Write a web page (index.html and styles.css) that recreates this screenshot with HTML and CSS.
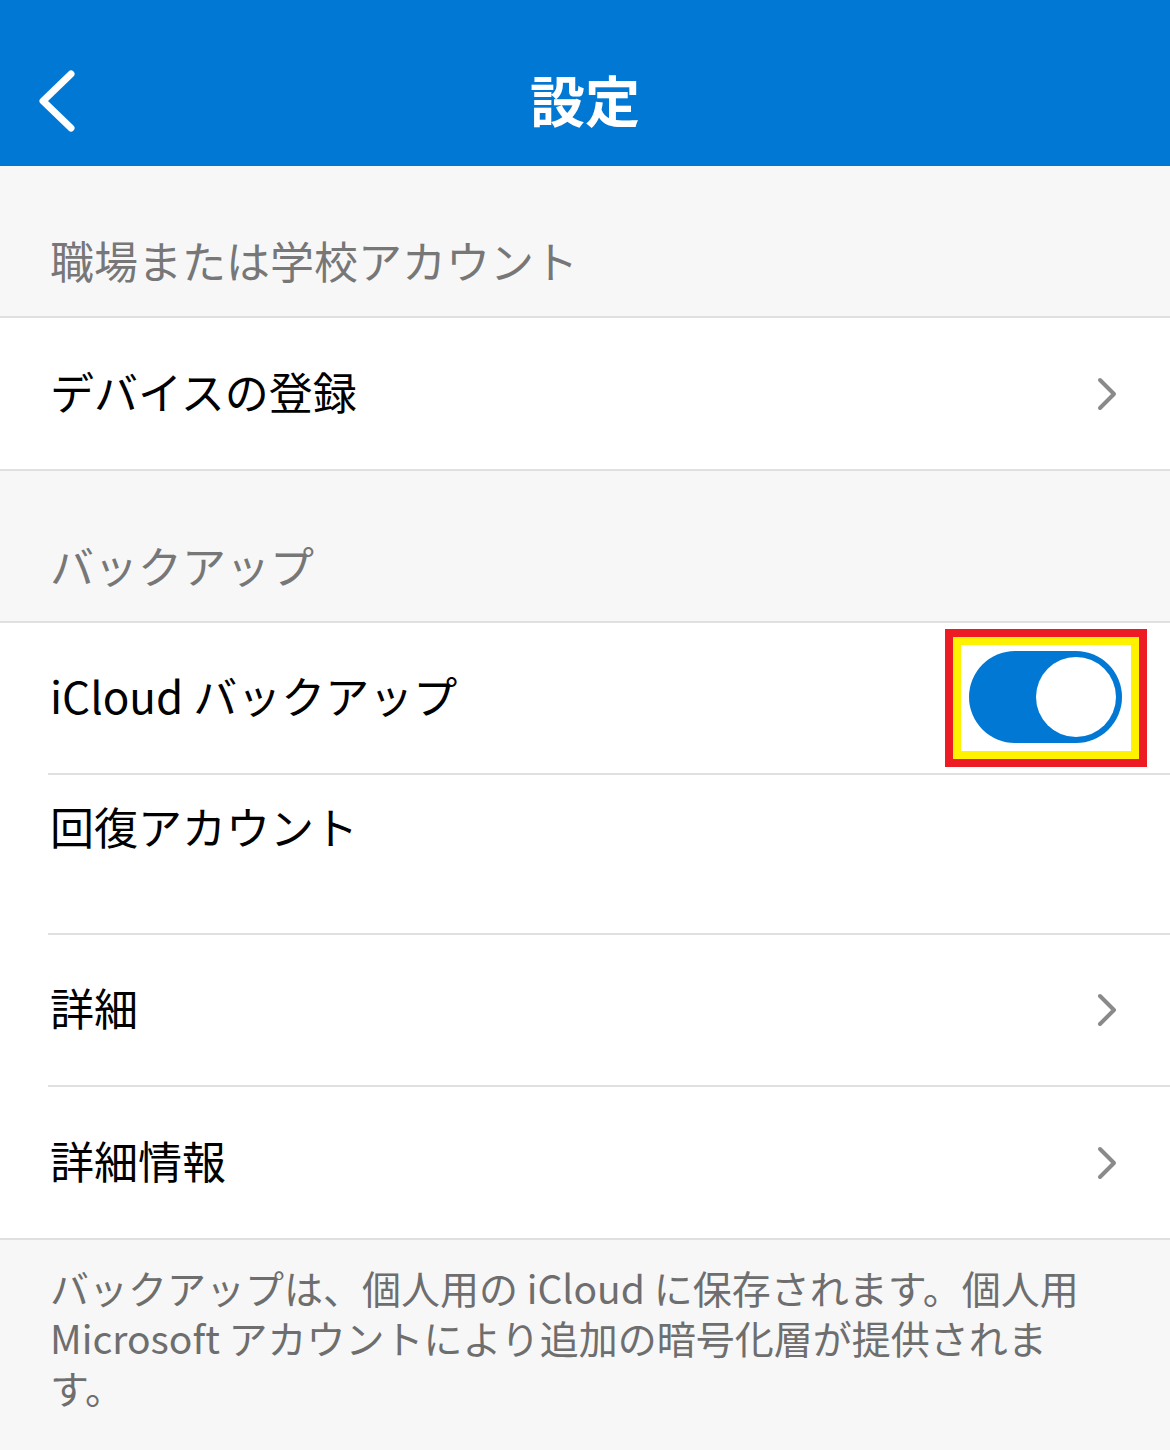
FILE: index.html
```html
<!DOCTYPE html>
<html lang="ja">
<head>
  <meta charset="UTF-8" />
  <meta name="viewport" content="width=device-width, initial-scale=1.0"/>
  <title>設定</title>
  <link rel="stylesheet" href="styles.css">
</head>
<body>

<header class="topbar">
  <button class="back" aria-label="戻る">
    <svg width="40" height="66" viewBox="0 0 40 66">
      <polyline points="35,6 7,33 35,60" fill="none" stroke="#fff" stroke-width="7" stroke-linecap="round" stroke-linejoin="round"/>
    </svg>
  </button>
  <h1>設定</h1>
</header>

<div class="section-title">職場または学校アカウント</div>
<div class="group">
  <div class="row">
    <span class="label">デバイスの登録</span>
    <svg class="chevron" width="22" height="36" viewBox="0 0 22 36">
      <polyline points="4,4 18,18 4,32" fill="none" stroke="#8a8a8a" stroke-width="4" stroke-linecap="round" stroke-linejoin="round"/>
    </svg>
  </div>
</div>

<div class="section-title">バックアップ</div>
<div class="group">
  <div class="row row-toggle">
    <span class="label">iCloud バックアップ</span>
    <div class="mark-red">
      <div class="mark-yellow">
        <div class="toggle on"><span class="knob"></span></div>
      </div>
    </div>
  </div>
  <div class="row row-tall">
    <span class="label">回復アカウント</span>
  </div>
  <div class="row">
    <span class="label">詳細</span>
    <svg class="chevron" width="22" height="36" viewBox="0 0 22 36">
      <polyline points="4,4 18,18 4,32" fill="none" stroke="#8a8a8a" stroke-width="4" stroke-linecap="round" stroke-linejoin="round"/>
    </svg>
  </div>
  <div class="row">
    <span class="label">詳細情報</span>
    <svg class="chevron" width="22" height="36" viewBox="0 0 22 36">
      <polyline points="4,4 18,18 4,32" fill="none" stroke="#8a8a8a" stroke-width="4" stroke-linecap="round" stroke-linejoin="round"/>
    </svg>
  </div>
</div>

<p class="note">バックアップは、個人用の iCloud に保存されます。個人用 Microsoft アカウントにより追加の暗号化層が提供されます。</p>

</body>
</html>
```

FILE: styles.css
```css
body {
  margin: 0;
  padding: 0;
  background: #f7f7f7;
  color: #000;
  font-family: "Noto Sans CJK JP", sans-serif;
}
.topbar {
  position: relative;
  height: 166px;
  background: #0078d4;
  display: flex;
  align-items: center;
  justify-content: center;
}
.topbar h1 {
  margin: 0;
  color: #fff;
  font-size: 55px;
  font-weight: bold;
  line-height: 1;
  padding-top: 30px;
}
.back {
  position: absolute;
  left: 36px;
  top: 68px;
  padding: 0;
  border: none;
  background: none;
}
.back svg {
  display: block;
}
.section-title {
  height: 152px;
  box-sizing: border-box;
  padding: 0 0 30px 50px;
  display: flex;
  align-items: flex-end;
  font-size: 44px;
  line-height: 52px;
  color: #777;
  border-bottom: 2px solid #e0e0e0;
}
.group {
  background: #fff;
  border-bottom: 2px solid #e0e0e0;
}
.row {
  height: 152px;
  box-sizing: border-box;
  margin-left: 48px;
  padding: 0 52px 0 2px;
  display: flex;
  align-items: center;
  justify-content: space-between;
  border-bottom: 2px solid #e0e0e0;
  font-size: 44px;
  line-height: 52px;
}
.row .label {
  padding-bottom: 6px;
}
.row:last-child {
  border-bottom: none;
  height: 151px;
}
.row-toggle {
  padding-right: 23px;
}
.row-tall {
  height: 160px;
  align-items: flex-start;
  padding-top: 25px;
}
.chevron {
  display: block;
}
.mark-red {
  border: 8px solid #ed1c24;
}
.mark-yellow {
  border: 8px solid #fff200;
  background: #fff;
  padding: 6px 9px 8px 8px;
}
.toggle {
  width: 153px;
  height: 92px;
  box-sizing: border-box;
  border-radius: 46px;
  background: #0078d4;
  padding: 6px;
  display: flex;
  justify-content: flex-end;
}
.knob {
  width: 80px;
  height: 80px;
  border-radius: 50%;
  background: #fff;
}
.note {
  margin: 0;
  padding: 22px 50px 40px 50px;
  font-size: 39px;
  line-height: 50px;
  color: #6e6e6e;
}
```
